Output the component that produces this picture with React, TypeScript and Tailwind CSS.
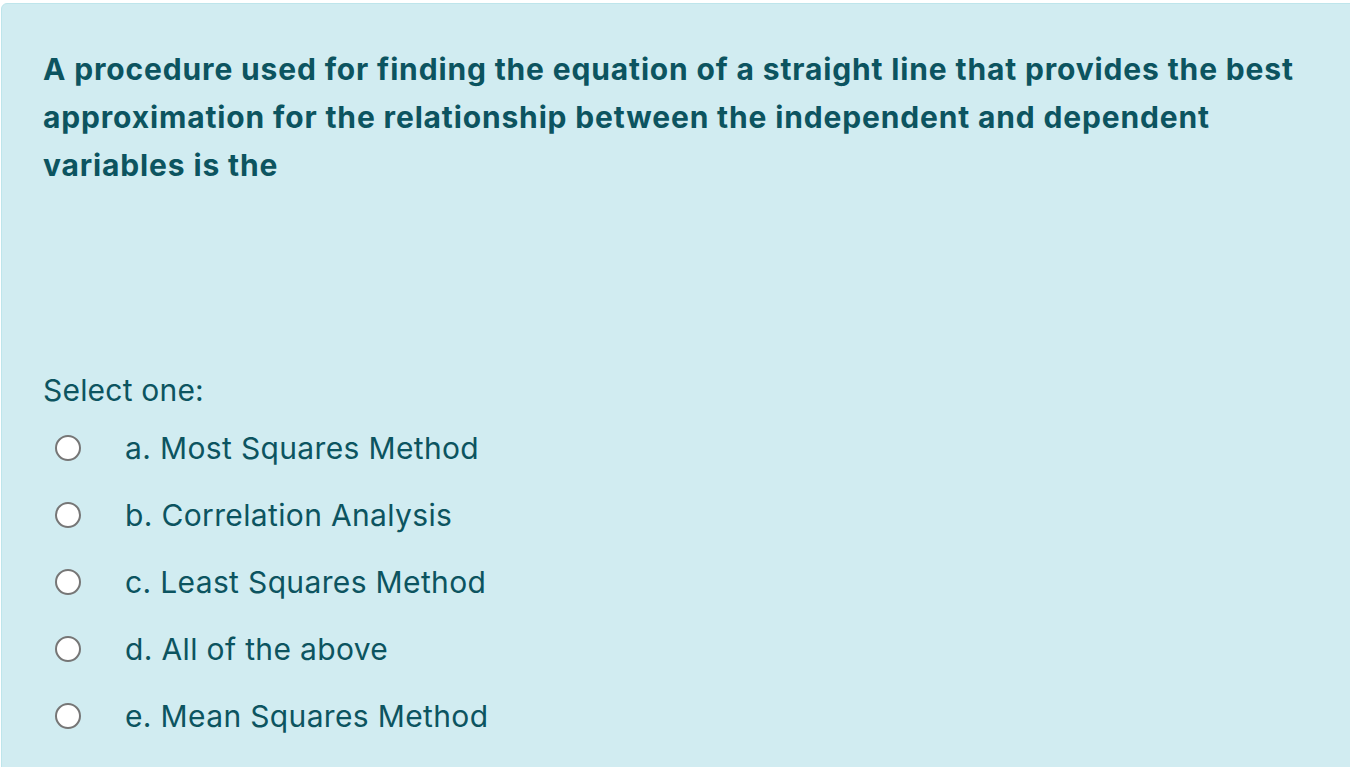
import React from 'react';

const options = [
  'a. Most Squares Method',
  'b. Correlation Analysis',
  'c. Least Squares Method',
  'd. All of the above',
  'e. Mean Squares Method',
];

const Radio: React.FC = () => (
  <span className="block w-[26px] h-[26px] rounded-full border-2 border-[#767676] bg-white shrink-0" />
);

export default function App() {
  return (
    <div className="w-[1350px] h-[767px] overflow-hidden bg-white font-['Inter',sans-serif] text-[#0c5460]">
      <div className="ml-px mt-[3px] w-[1400px] h-[800px] bg-[#d1ecf1] border border-[#bee5eb] rounded-tl-[6px] pl-[41px] pt-[41px]">
        <p className="w-[1275px] text-[30px] leading-[48px] font-bold tracking-[0.85px]">
          A procedure used for finding the equation of a straight line that provides the best approximation for the relationship between the independent and dependent variables is the
        </p>
        <p className="mt-[177px] text-[30px] leading-[48px] tracking-[0.2px]">Select one:</p>
        <div className="flex flex-col">
          {options.map(opt => (
            <label key={opt} className="flex items-center h-[67px]">
              <span className="w-[82px] pl-[12px] flex items-center">
                <Radio />
              </span>
              <span className="text-[30px] leading-[48px] tracking-[0.35px]">{opt}</span>
            </label>
          ))}
        </div>
      </div>
    </div>
  );
}
